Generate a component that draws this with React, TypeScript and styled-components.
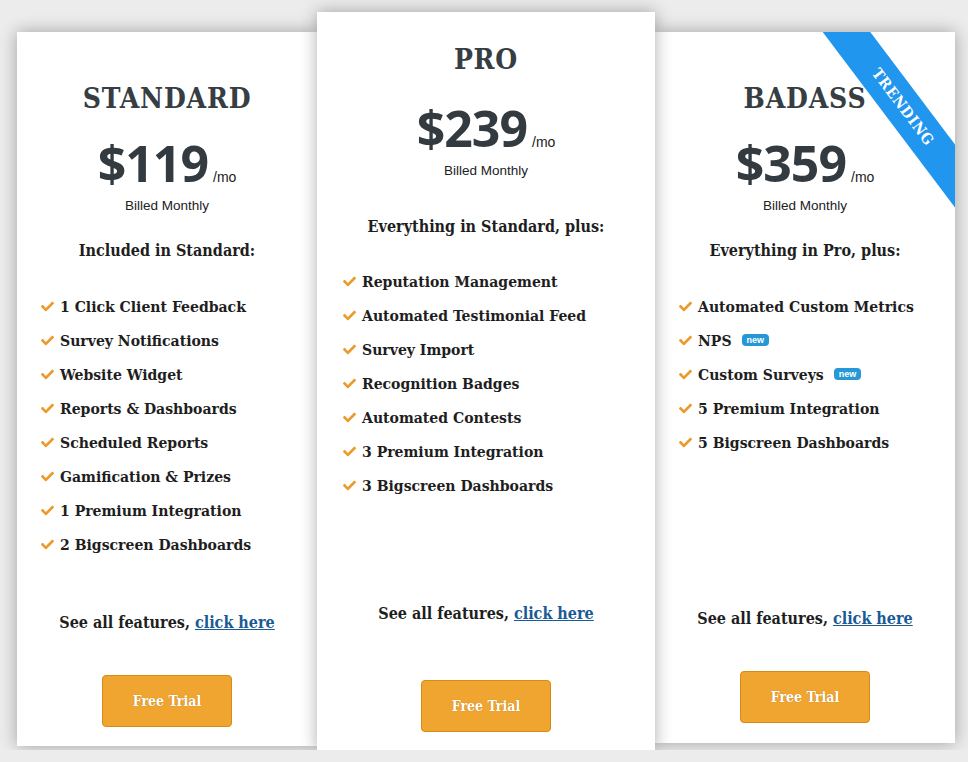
import React from "react";
import styled, { createGlobalStyle } from "styled-components";
import { FaCheck } from "react-icons/fa";

const GlobalStyle = createGlobalStyle`
  html, body {
    margin: 0;
    padding: 0;
    background: #ececec;
    min-height: 100%;
  }
  body {
    font-family: "DejaVu Serif Condensed", "DejaVu Serif", serif;
  }
`;

const SLAB = `"DejaVu Serif Condensed", "DejaVu Serif", serif`;

const Page = styled.div`
  display: flex;
  align-items: flex-start;
  padding: 12px 0 0 17px;
  height: 750px;
  box-sizing: border-box;
`;

interface CardProps {
  $w: number;
  $h: number;
  $top: number;
  $pt: number;
  $pb: number;
  $front?: boolean;
}

const Card = styled.div<CardProps>`
  position: relative;
  overflow: hidden;
  box-sizing: border-box;
  width: ${(p) => p.$w}px;
  height: ${(p) => p.$h}px;
  margin-top: ${(p) => p.$top}px;
  padding: ${(p) => p.$pt}px 0 ${(p) => p.$pb}px;
  background: #ffffff;
  box-shadow: 0 0 16px rgba(0, 0, 0, 0.32);
  z-index: ${(p) => (p.$front ? 2 : 1)};
  display: flex;
  flex-direction: column;
  align-items: center;
`;

const Title = styled.h2`
  margin: 0;
  font-family: ${SLAB};
  font-weight: 700;
  font-size: 28px;
  line-height: 36px;
  letter-spacing: 0.8px;
  color: #363d43;
`;

const PriceRow = styled.div<{ $mt: number }>`
  margin-top: ${(p) => p.$mt}px;
  display: flex;
  align-items: baseline;
  height: 56px;
`;

const Amount = styled.span`
  font-family: "Open Sans", sans-serif;
  font-weight: 700;
  font-size: 50px;
  line-height: 56px;
  letter-spacing: -1px;
  color: #343b40;
`;

const Per = styled.span`
  margin-left: 5px;
  font-family: "Liberation Sans", Arial, sans-serif;
  font-size: 14px;
  color: #222;
`;

const Billed = styled.div`
  margin-top: 6.5px;
  font-family: "Liberation Sans", Arial, sans-serif;
  font-size: 13.5px;
  line-height: 18px;
  color: #222;
`;

const Subtitle = styled.div<{ $mt: number }>`
  margin-top: ${(p) => p.$mt}px;
  font-family: ${SLAB};
  font-weight: 700;
  font-size: 16px;
  line-height: 22px;
  color: #1e1e1e;
`;

const List = styled.ul<{ $mt: number; $pl: number }>`
  list-style: none;
  margin: ${(p) => p.$mt}px 0 0;
  padding: 0 0 0 ${(p) => p.$pl}px;
  align-self: stretch;
`;

const Item = styled.li`
  display: flex;
  align-items: center;
  height: 34px;
  font-family: ${SLAB};
  font-weight: 700;
  font-size: 15.6px;
  color: #1e1e1e;
`;

const Check = styled(FaCheck)`
  width: 13px;
  height: 13px;
  color: #eb9a2b;
  margin-right: 6px;
  flex: none;
`;

const NewBadge = styled.span`
  display: inline-block;
  margin-left: 10px;
  height: 12px;
  line-height: 12px;
  padding: 0 5px;
  border-radius: 4px;
  background: #2798d6;
  color: #fff;
  font-family: "Liberation Sans", Arial, sans-serif;
  font-weight: 700;
  font-size: 9px;
`;

const SeeAll = styled.div<{ $mb: number }>`
  margin-top: auto;
  margin-bottom: ${(p) => p.$mb}px;
  font-family: ${SLAB};
  font-weight: 700;
  font-size: 16px;
  line-height: 22px;
  color: #1e1e1e;
`;

const Link = styled.a`
  color: #1a5a95;
  text-decoration: underline;
  cursor: pointer;
`;

const TrialButton = styled.button`
  width: 130px;
  height: 52px;
  box-sizing: border-box;
  border: 1px solid #d68b14;
  border-radius: 4px;
  background: #f1a531;
  color: #fff;
  font-family: ${SLAB};
  font-weight: 700;
  font-size: 14px;
  text-shadow: 0 0 1px rgba(120, 70, 0, 0.5);
  cursor: pointer;
`;

const Ribbon = styled.div`
  position: absolute;
  left: 118px;
  top: 56px;
  width: 260px;
  height: 38px;
  background: #2196ee;
  transform: rotate(53deg);
  display: flex;
  align-items: center;
  justify-content: center;
  color: #fff;
  font-family: ${SLAB};
  font-weight: 700;
  font-size: 15px;
  letter-spacing: 0.8px;
`;

type Feature = { label: string; isNew?: boolean };

interface Plan {
  name: string;
  price: string;
  subtitle: string;
  features: Feature[];
  w: number;
  h: number;
  top: number;
  pt: number;
  pb: number;
  priceGap: number;
  subGap: number;
  listGap: number;
  listPad: number;
  footGap: number;
  front?: boolean;
  ribbon?: boolean;
}

const plans: Plan[] = [
  {
    name: "STANDARD",
    price: "$119",
    subtitle: "Included in Standard:",
    features: [
      { label: "1 Click Client Feedback" },
      { label: "Survey Notifications" },
      { label: "Website Widget" },
      { label: "Reports & Dashboards" },
      { label: "Scheduled Reports" },
      { label: "Gamification & Prizes" },
      { label: "1 Premium Integration" },
      { label: "2 Bigscreen Dashboards" },
    ],
    w: 300,
    h: 714,
    top: 20,
    pt: 49,
    pb: 19,
    priceGap: 17.5,
    subGap: 25,
    listGap: 27,
    listPad: 24,
    footGap: 41,
  },
  {
    name: "PRO",
    price: "$239",
    subtitle: "Everything in Standard, plus:",
    features: [
      { label: "Reputation Management" },
      { label: "Automated Testimonial Feed" },
      { label: "Survey Import" },
      { label: "Recognition Badges" },
      { label: "Automated Contests" },
      { label: "3 Premium Integration" },
      { label: "3 Bigscreen Dashboards" },
    ],
    w: 338,
    h: 740,
    top: 0,
    pt: 30,
    pb: 20,
    priceGap: 21.5,
    subGap: 36,
    listGap: 26,
    listPad: 26,
    footGap: 55,
    front: true,
  },
  {
    name: "BADASS",
    price: "$359",
    subtitle: "Everything in Pro, plus:",
    features: [
      { label: "Automated Custom Metrics" },
      { label: "NPS", isNew: true },
      { label: "Custom Surveys", isNew: true },
      { label: "5 Premium Integration" },
      { label: "5 Bigscreen Dashboards" },
    ],
    w: 300,
    h: 711,
    top: 20,
    pt: 49,
    pb: 20,
    priceGap: 17.5,
    subGap: 25,
    listGap: 27,
    listPad: 24,
    footGap: 41,
    ribbon: true,
  },
];

export default function App() {
  return (
    <>
      <GlobalStyle />
      <Page>
        {plans.map((p) => (
          <Card
            key={p.name}
            $w={p.w}
            $h={p.h}
            $top={p.top}
            $pt={p.pt}
            $pb={p.pb}
            $front={p.front}
          >
            {p.ribbon && <Ribbon>TRENDING</Ribbon>}
            <Title>{p.name}</Title>
            <PriceRow $mt={p.priceGap}>
              <Amount>{p.price}</Amount>
              <Per>/mo</Per>
            </PriceRow>
            <Billed>Billed Monthly</Billed>
            <Subtitle $mt={p.subGap}>{p.subtitle}</Subtitle>
            <List $mt={p.listGap} $pl={p.listPad}>
              {p.features.map((f) => (
                <Item key={f.label}>
                  <Check />
                  {f.label}
                  {f.isNew && <NewBadge>new</NewBadge>}
                </Item>
              ))}
            </List>
            <SeeAll $mb={p.footGap}>
              See all features, <Link>click here</Link>
            </SeeAll>
            <TrialButton>Free Trial</TrialButton>
          </Card>
        ))}
      </Page>
    </>
  );
}
